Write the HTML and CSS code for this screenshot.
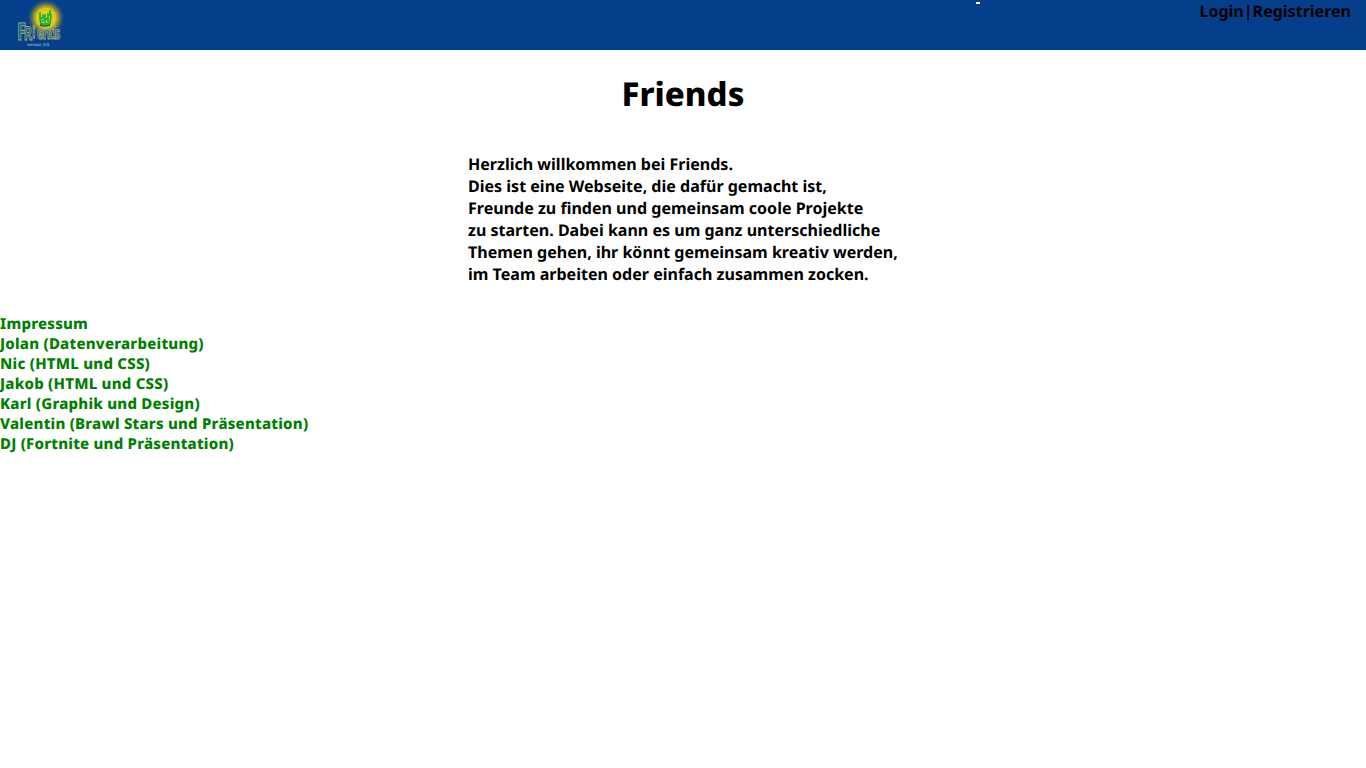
FILE: index.html
```html
<!DOCTYPE html>
<html lang="de">
<head>
<meta charset="utf-8">
<title>Friends</title>
<link rel="stylesheet" href="styles.css">
</head>
<body>
<header class="bar">
<svg class="logo" viewBox="0 0 80 50" width="80" height="50">
<defs>
<radialGradient id="glow"><stop offset="0" stop-color="#f0d810"/><stop offset=".5" stop-color="#e0c810"/><stop offset=".72" stop-color="#8a8c3c" stop-opacity=".75"/><stop offset="1" stop-color="#1d4c82" stop-opacity="0"/></radialGradient>
</defs>
<ellipse cx="46" cy="18" rx="19" ry="19" fill="url(#glow)"/>
<path d="M40 13v5l1 6h9l1-9M40 18h3v-3M45 22v-7M48 22v-8M50 15v-4M42 21l6-3" fill="none" stroke="#18b447" stroke-width="1.8" stroke-linecap="round" stroke-linejoin="round"/>
<path d="M40 25q5 2 10 0" fill="none" stroke="#087044" stroke-width="1.5"/>
<g transform="translate(17 40) scale(.68 1)"><text class="lettering" x="0 10 22 29 38 47 55" y="0 0 -2 -1 -1 -1 -1"><tspan font-size="24">F</tspan><tspan font-size="19">R</tspan>iends</text></g>
<text class="version" x="27" y="46" textLength="22" lengthAdjust="spacingAndGlyphs">version_0.0</text>
</svg>
<span class="dash"></span>
<nav class="links"><a>Login</a>|<a>Registrieren</a></nav>
</header>
<h1 class="title">Friends</h1>
<p class="intro">Herzlich willkommen bei Friends.<br>Dies ist eine Webseite, die dafür gemacht ist,<br>Freunde zu finden und gemeinsam coole Projekte<br>zu starten. Dabei kann es um ganz unterschiedliche<br>Themen gehen, ihr könnt gemeinsam kreativ werden,<br>im Team arbeiten oder einfach zusammen zocken.</p>
<footer class="imprint">Impressum<br>Jolan (Datenverarbeitung)<br>Nic (HTML und CSS)<br>Jakob (HTML und CSS)<br>Karl (Graphik und Design)<br>Valentin (Brawl Stars und Präsentation)<br>DJ (Fortnite und Präsentation)</footer>
</body>
</html>
```
FILE: styles.css
```css
body { margin: 0; background: #fff; color: #000; font-family: "Noto Sans", sans-serif; font-size: 16px; font-weight: 700; text-rendering: geometricPrecision; }
.bar { display: flex; height: 50px; background: #053f8b; }
.logo { display: block; }
.lettering { font-size: 17px; font-weight: 700; fill: #087467; stroke: #c6a596; stroke-width: .8; }
.version { font-size: 4px; font-weight: 500; fill: #9fcbd8; }
.dash { width: 4px; height: 2px; margin: 2px 0 0 896px; background: #fff; }
.links { margin-left: auto; padding-right: 15px; font-size: 16.04px; line-height: 22px; }
.title { margin: 22px 0 0; font-size: 33px; font-weight: 800; line-height: 44px; text-align: center; }
.intro { width: 430px; margin: 37px auto 0; font-size: 16.04px; line-height: 22px; white-space: nowrap; }
.imprint { margin-top: 29px; color: green; font-size: 15px; font-weight: 800; letter-spacing: .22px; line-height: 20px; }
```
